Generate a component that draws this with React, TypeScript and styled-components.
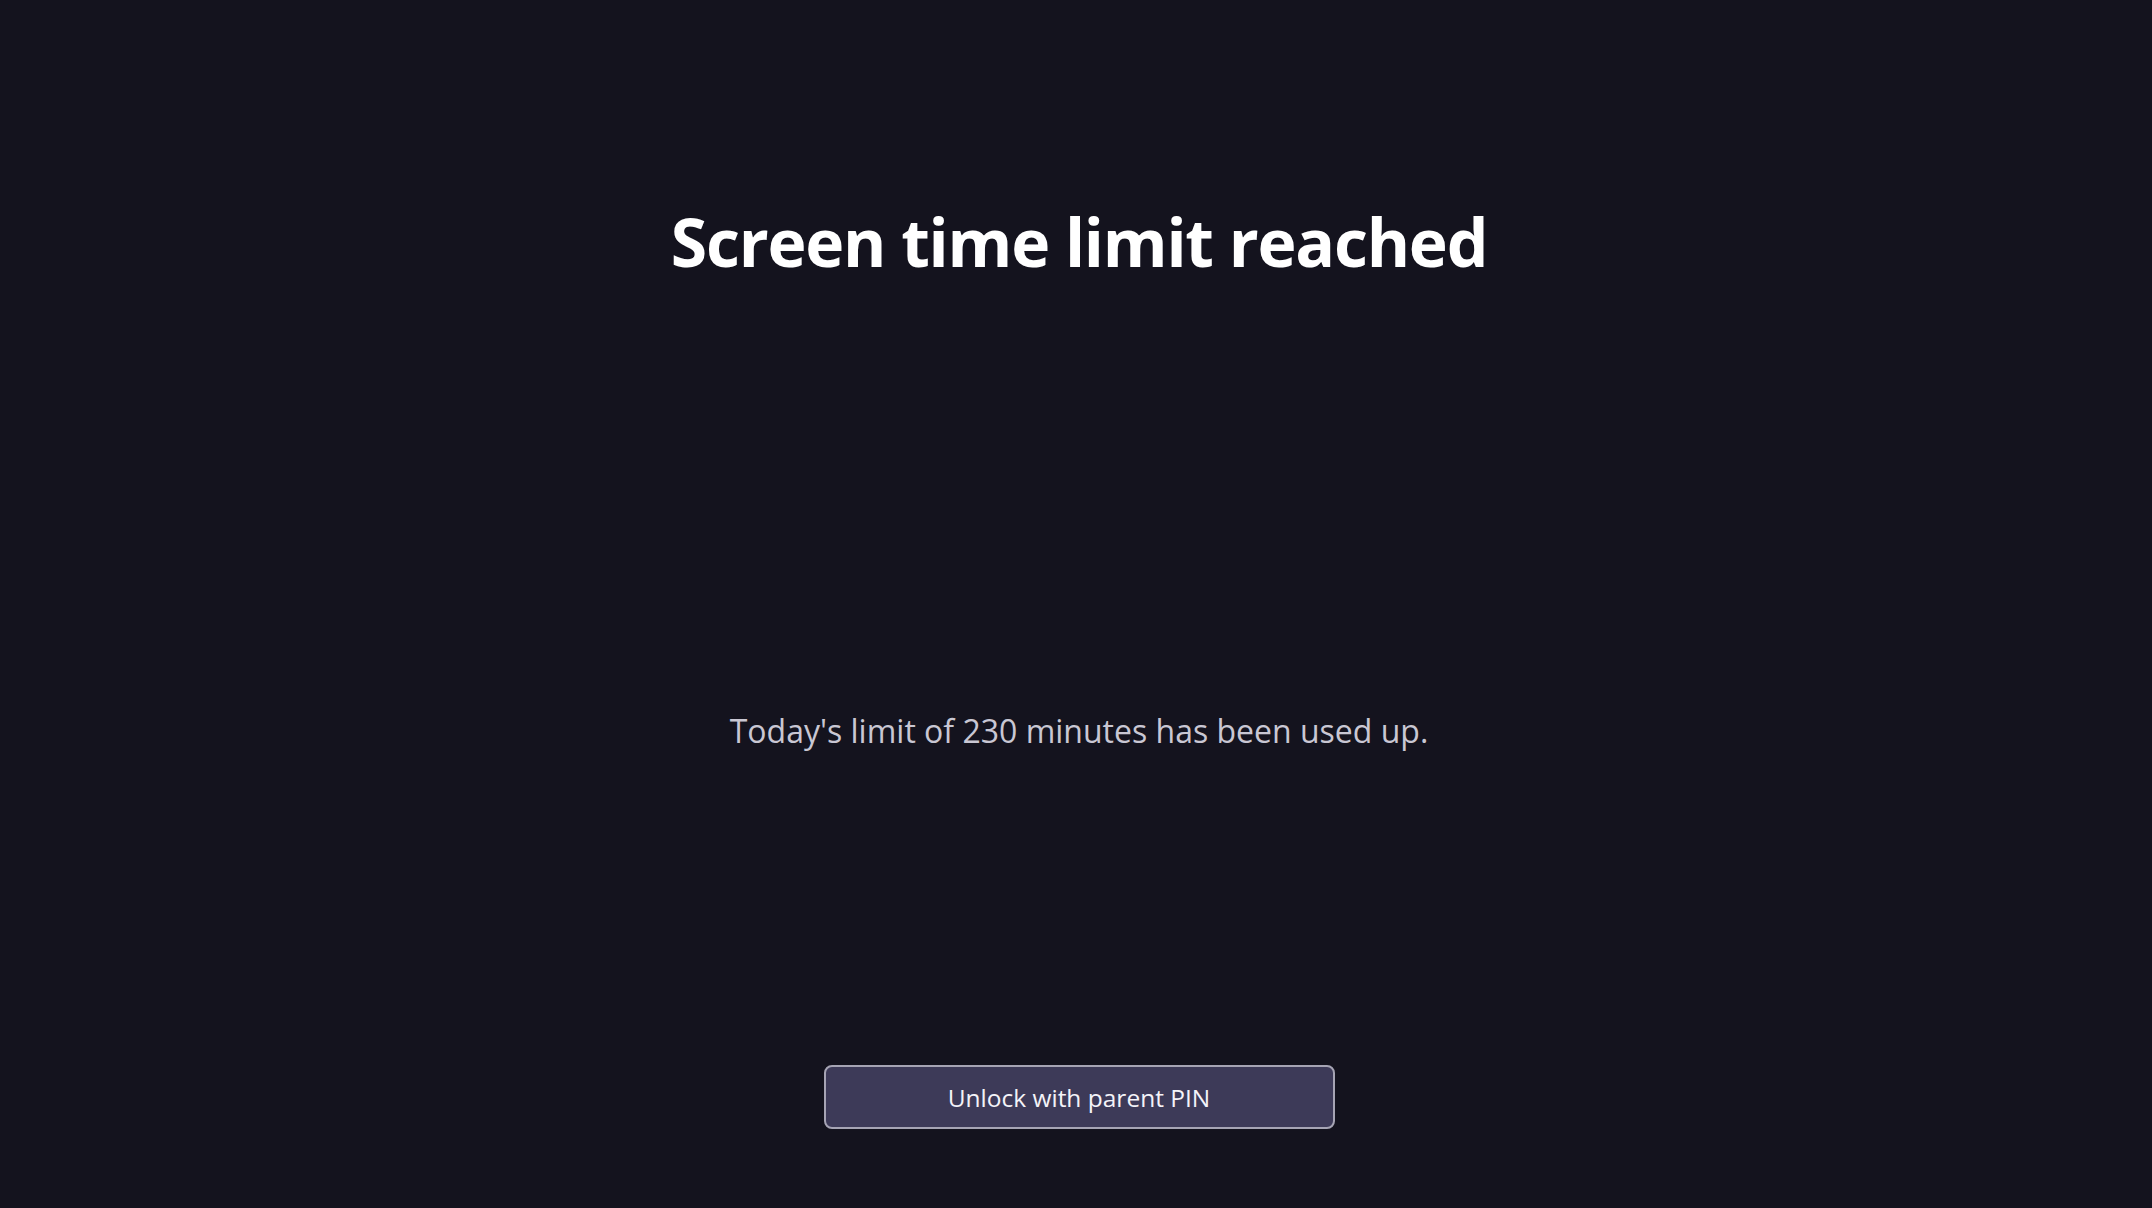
import styled, { createGlobalStyle } from 'styled-components';

const GlobalStyle = createGlobalStyle`
  html, body {
    margin: 0;
    padding: 0;
    background: #14131e;
  }

  body {
    font-family: 'Open Sans', 'Noto Sans', sans-serif;
    -webkit-font-smoothing: antialiased;
  }
`;

const Screen = styled.main`
  display: flex;
  flex-direction: column;
  align-items: center;

  width: 100%;
  min-height: 100vh;
  box-sizing: border-box;

  padding: 202px 0 79px 6px;

  background: #14131e;
`;

const Title = styled.h1`
  margin: 0;

  font-size: 66px;
  font-weight: 700;
  line-height: 1.2;
  letter-spacing: -1.2px;
  color: #ffffff;
`;

const Body = styled.div`
  display: flex;
  flex: 1;
  align-items: center;
  justify-content: center;

  padding-top: 116px;
`;

const Message = styled.p`
  margin: 0;

  font-size: 32px;
  font-weight: 400;
  line-height: 1.3;
  color: #c9c7d3;
`;

const UnlockButton = styled.button`
  width: 511px;
  height: 64px;

  border: 2px solid #a6a4b4;
  border-radius: 8px;

  font-family: inherit;
  font-size: 24.5px;
  color: #f4f3f8;

  background: #3d3a58;
  cursor: pointer;
`;

export default function App() {
  return (
    <>
      <GlobalStyle />
      <Screen>
        <Title>Screen time limit reached</Title>
        <Body>
          <Message>Today's limit of 230 minutes has been used up.</Message>
        </Body>
        <UnlockButton type="button">Unlock with parent PIN</UnlockButton>
      </Screen>
    </>
  );
}
